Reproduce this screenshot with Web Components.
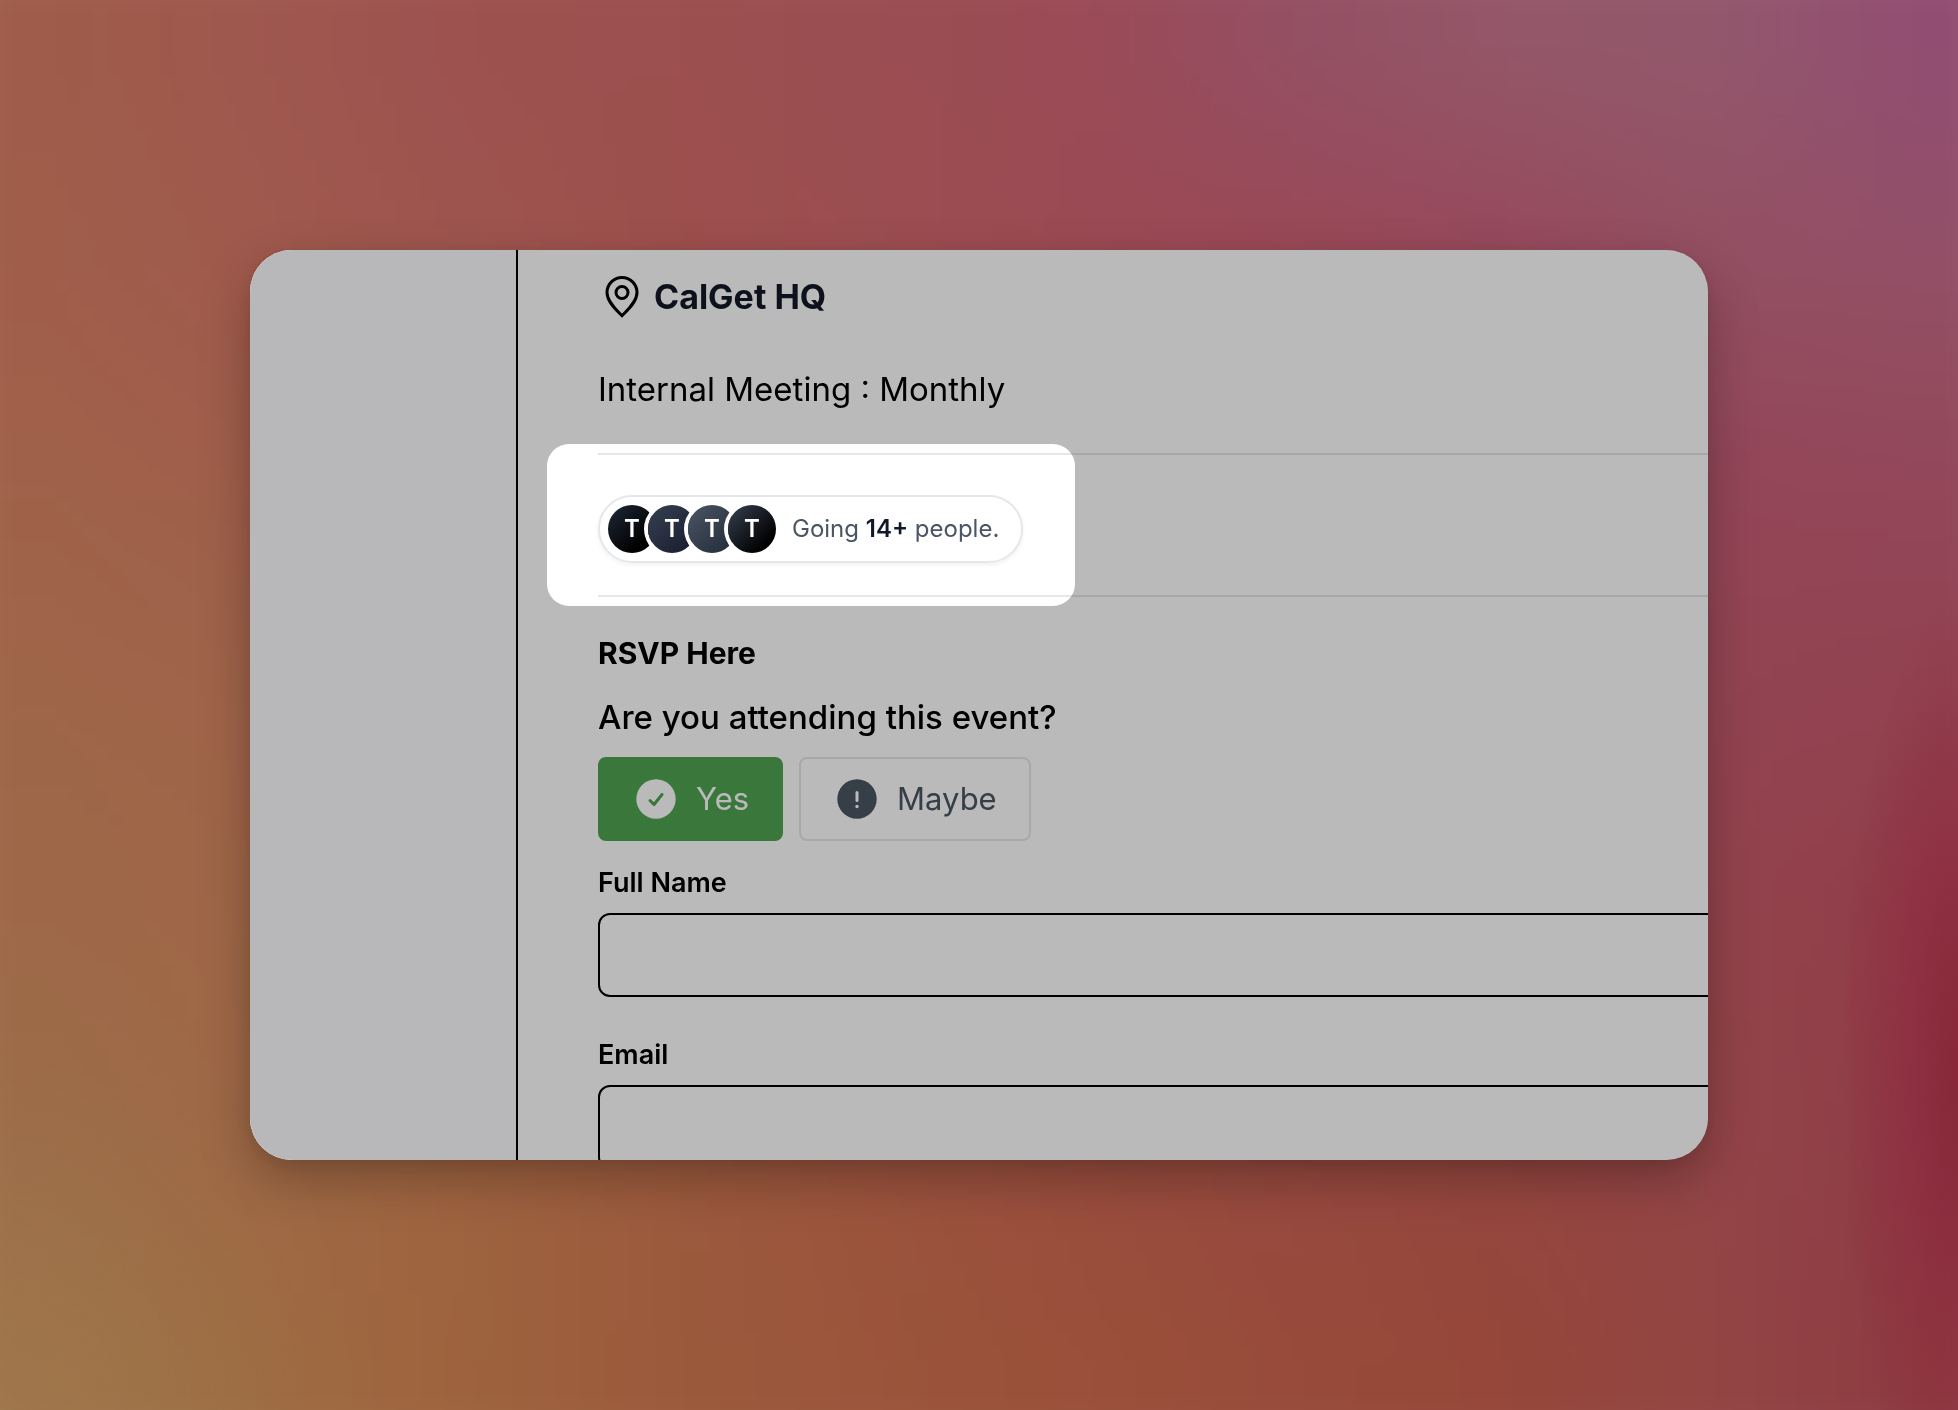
<!DOCTYPE html>
<html lang="en">
<head>
<meta charset="utf-8">
<title>CalGet HQ</title>
<style>
body{
  margin      : 0;
  font-family : Inter, "Liberation Sans", sans-serif;
  color       : #000;
}
</style>
</head>
<body>

<mesh-backdrop>
  <event-card>
    <place-title>CalGet HQ</place-title>
    <event-note>Internal Meeting : Monthly</event-note>
    <attendee-row>
      <spot-light>
        <going-pill initials="T,T,T,T" count="14+"></going-pill>
      </spot-light>
    </attendee-row>
    <rsvp-form></rsvp-form>
  </event-card>
</mesh-backdrop>

<script>
class Base extends HTMLElement{
	render(html){
		const tpl = document.createElement('template');
		tpl.innerHTML = html;
		this.attachShadow({ mode: 'open' });
		this.shadowRoot.appendChild(tpl.content.cloneNode(true));
	}
}

// colour grid, stretched smoothly over the whole window
const mesh = [
	['9f5c4a','9f584f','9d5250','9c504f','9b4e52','9a4b57','955064','945769','93586c','924e72'],
	['a05e4b','a05a4d','9e554e','9d504d','9c4e51','9b4a53','9a4855','97485a','944f62','935066'],
	['a0624a','a05f4b','9f594c','9d534c','9c4e50','9b4a50','994752','964655','944657','934759'],
	['9f6649','a0644a','9f5e4a','9d564b','9c504c','9a4b4e','98474e','954550','934452','924250'],
	['9e6948','a06748','9f6246','9d5a45','9c5345','9a4c47','984748','95454a','93444c','913c49'],
	['9d6d49','9f6946','9e6340','9c5a3e','9b533e','994d3e','974940','954640','934548','8f3c48'],
	['9e7249','9f6c43','9e633e','9c5a3c','9b553b','9a503a','984b3a','964739','934544','8e3b42']
];

class MeshBackdrop extends Base{
	constructor(){
		super();
		this.render(`
<style>
:host{
  display    : grid;
  box-sizing : border-box;
  position   : relative;
  height     : 100vh;
  padding    : 250px;
  overflow   : hidden;
}
canvas{
  position : absolute;
  top      : -60px;
  left     : -60px;
  width    : calc(100% + 120px);
  height   : calc(100% + 120px);
  filter   : blur(30px);
}
.edge{
  position   : absolute;
  inset      : 0;
  background : radial-gradient(ellipse 7% 34% at 101% 76%, rgba(132,32,50,.85), rgba(140,38,60,.5) 50%, transparent),
               radial-gradient(ellipse 16% 26% at 0% 100%, rgba(160,124,78,.45), transparent);
}
slot{ display: contents; }
</style>
<canvas></canvas>
<div class="edge"></div>
<slot></slot>`);

		const canvas = this.shadowRoot.querySelector('canvas');
		canvas.width  = mesh[0].length;
		canvas.height = mesh.length;
		const ctx = canvas.getContext('2d');
		for (var y = 0; y < mesh.length; y++) {
			for (var x = 0; x < mesh[y].length; x++) {
				ctx.fillStyle = '#' + mesh[y][x];
				ctx.fillRect(x, y, 1, 1);
			}
		}
	}
}

class EventCard extends Base{
	constructor(){
		super();
		this.render(`
<style>
:host{
  display       : grid;
  grid-template-columns : 266px minmax(0, 1fr);
  position      : relative;
  isolation     : isolate;
  min-height    : 0;
  overflow      : hidden;
  border-radius : 42px;
  background    : #fff;
  box-shadow    : 0 20px 50px rgba(0,0,0,.26), 0 4px 16px rgba(0,0,0,.08);
}
aside{
  background   : #fdfdff;
}
main{
  min-height   : 0;
  border-left  : 2px solid #000;
  padding-left : 80px;
  margin-right : -80px;
}
</style>
<aside></aside>
<main><slot></slot></main>`);
	}
}

class PlaceTitle extends Base{
	constructor(){
		super();
		this.render(`
<style>
:host{
  display     : flex;
  align-items : center;
  gap         : 8px;
  padding-top : 23px;
}
h1{
  margin      : 0;
  font-size   : 34px;
  line-height : 48px;
  font-weight : 700;
  color       : #111827;
}
svg{ display: block; }
</style>
<svg width="48" height="48" viewBox="0 0 48 48" fill="none" stroke="#000" stroke-width="3">
  <path d="M24 42.700C29 37.500 39 29 39 19.500A15 15 0 0 0 9 19.500C9 29 19 37.500 24 42.700z"/>
  <circle cx="24" cy="19.500" r="6"/>
</svg>
<h1><slot></slot></h1>`);
	}
}

class EventNote extends Base{
	constructor(){
		super();
		this.render(`
<style>
:host{
  display     : block;
  padding     : 44px 0 40px;
  font-size   : 33px;
  line-height : 48px;
}
</style>
<slot></slot>`);
	}
}

class AttendeeRow extends Base{
	constructor(){
		super();
		this.render(`
<style>
:host{
  display       : flex;
  padding       : 40px 0 32px;
  border-top    : 2px solid #e5e7eb;
  border-bottom : 2px solid #e5e7eb;
}
</style>
<slot></slot>`);
	}
}

// leaves its content lit and dims the rest of the card
class SpotLight extends Base{
	constructor(){
		super();
		this.render(`
<style>
:host{
  display  : block;
  position : relative;
}
:host::after{
  content        : "";
  position       : absolute;
  z-index        : 2;
  inset          : -51px -52px -43px -51px;
  border-radius  : 22px;
  box-shadow     : 0 0 0 9999px rgba(0,0,0,.27);
  pointer-events : none;
}
</style>
<slot></slot>`);
	}
}

class GoingPill extends Base{
	constructor(){
		super();
		this.render(`
<style>
:host{
  display       : flex;
  align-items   : center;
  gap           : 16px;
  padding       : 8px 22px 8px 8px;
  border        : 2px solid #e5e7eb;
  border-radius : 34px;
  box-shadow    : 0 2px 4px rgba(0,0,0,.06);
  font-size     : 24px;
  line-height   : 48px;
  color         : #4b5563;
}
.faces{ display: flex; }
.face{
  width         : 48px;
  height        : 48px;
  border-radius : 50%;
  box-shadow    : 0 0 0 4px #fff;
  background    : linear-gradient(135deg, #1f2937, #000 75%);
  color         : #fff;
  font-weight   : 600;
  text-align    : center;
}
.face + .face{ margin-left: -8px; }
.face:nth-child(2){ background: linear-gradient(135deg, #374151, #151a2c); }
.face:nth-child(3){ background: linear-gradient(135deg, #4b5563, #1f2937); }
.face:nth-child(4){ background: linear-gradient(135deg, #374151, #000 80%); }
p{ margin: 0; white-space: nowrap; }
b{ font-weight: 600; color: #111827; }
</style>
<div class="faces"></div>
<p>Going <b></b> people.</p>`);
	}

	connectedCallback(){
		const faces = this.shadowRoot.querySelector('.faces');
		this.getAttribute('initials').split(',').forEach(function(letter) {
			const face = document.createElement('span');
			face.setAttribute('class','face');
			face.textContent = letter;
			faces.appendChild(face);
		});
		this.shadowRoot.querySelector('b').textContent = this.getAttribute('count');
	}
}

class AnswerButton extends Base{
	constructor(){
		super();
		this.render(`
<style>
:host{ display: block; }
button{
  display       : flex;
  align-items   : center;
  gap           : 16px;
  padding       : 16px 32px;
  border        : 2px solid #e5e7eb;
  border-radius : 8px;
  background    : transparent;
  font          : inherit;
  font-size     : 31px;
  line-height   : 48px;
  color         : #4b5563;
}
:host([chosen]) button{
  border-color : #4fa352;
  background   : #4fa352;
  color        : #fff;
}
</style>
<button type="button"><slot name="icon"></slot><span><slot></slot></span></button>`);
	}
}

class TextField extends Base{
	constructor(){
		super();
		this.render(`
<style>
:host{
  display        : block;
  padding-bottom : 38px;
}
label{
  display     : block;
  font-size   : 27px;
  line-height : 40px;
  font-weight : 600;
}
input{
  display       : block;
  box-sizing    : border-box;
  width         : 100%;
  height        : 84px;
  margin-top    : 10px;
  padding       : 0 24px;
  border        : 2px solid #000;
  border-radius : 12px;
  background    : transparent;
  font          : inherit;
  font-size     : 32px;
}
</style>
<label for="field"></label>
<input id="field">`);
	}

	connectedCallback(){
		this.shadowRoot.querySelector('label').textContent = this.getAttribute('label');
		this.shadowRoot.querySelector('input').setAttribute('type', this.getAttribute('type'));
	}
}

class RsvpForm extends Base{
	constructor(){
		super();
		this.render(`
<style>
:host{
  display     : block;
  padding-top : 32px;
}
h2, p{
  margin      : 0 0 16px;
  line-height : 48px;
}
h2{ font-size: 30px; }
p{
  font-size   : 33px;
  font-weight : 500;
}
.answers{
  display : flex;
  gap     : 16px;
  margin-bottom : 22px;
}
svg{ display: block; }
</style>
<h2>RSVP Here</h2>
<p>Are you attending this event?</p>
<div class="answers">
  <answer-button chosen>
    <svg slot="icon" width="48" height="48" viewBox="0 0 48 48" fill="none">
      <circle cx="24" cy="24" r="19.700" fill="#fff"/>
      <path d="M18 25.500L22 29.500L30 19.500" stroke="#4fa352" stroke-width="3" stroke-linecap="round" stroke-linejoin="round"/>
    </svg>Yes
  </answer-button>
  <answer-button>
    <svg slot="icon" width="48" height="48" viewBox="0 0 48 48" fill="none">
      <circle cx="24" cy="24" r="19.700" fill="#4b5563"/>
      <path d="M24 17.500V25.500" stroke="#fff" stroke-width="3" stroke-linecap="round"/>
      <circle cx="24" cy="31.500" r="1.700" fill="#fff"/>
    </svg>Maybe
  </answer-button>
</div>
<text-field label="Full Name" type="text"></text-field>
<text-field label="Email" type="email"></text-field>`);
	}
}

window.customElements.define('mesh-backdrop', MeshBackdrop);
window.customElements.define('event-card', EventCard);
window.customElements.define('place-title', PlaceTitle);
window.customElements.define('event-note', EventNote);
window.customElements.define('attendee-row', AttendeeRow);
window.customElements.define('spot-light', SpotLight);
window.customElements.define('going-pill', GoingPill);
window.customElements.define('answer-button', AnswerButton);
window.customElements.define('text-field', TextField);
window.customElements.define('rsvp-form', RsvpForm);
</script>
</body>
</html>
